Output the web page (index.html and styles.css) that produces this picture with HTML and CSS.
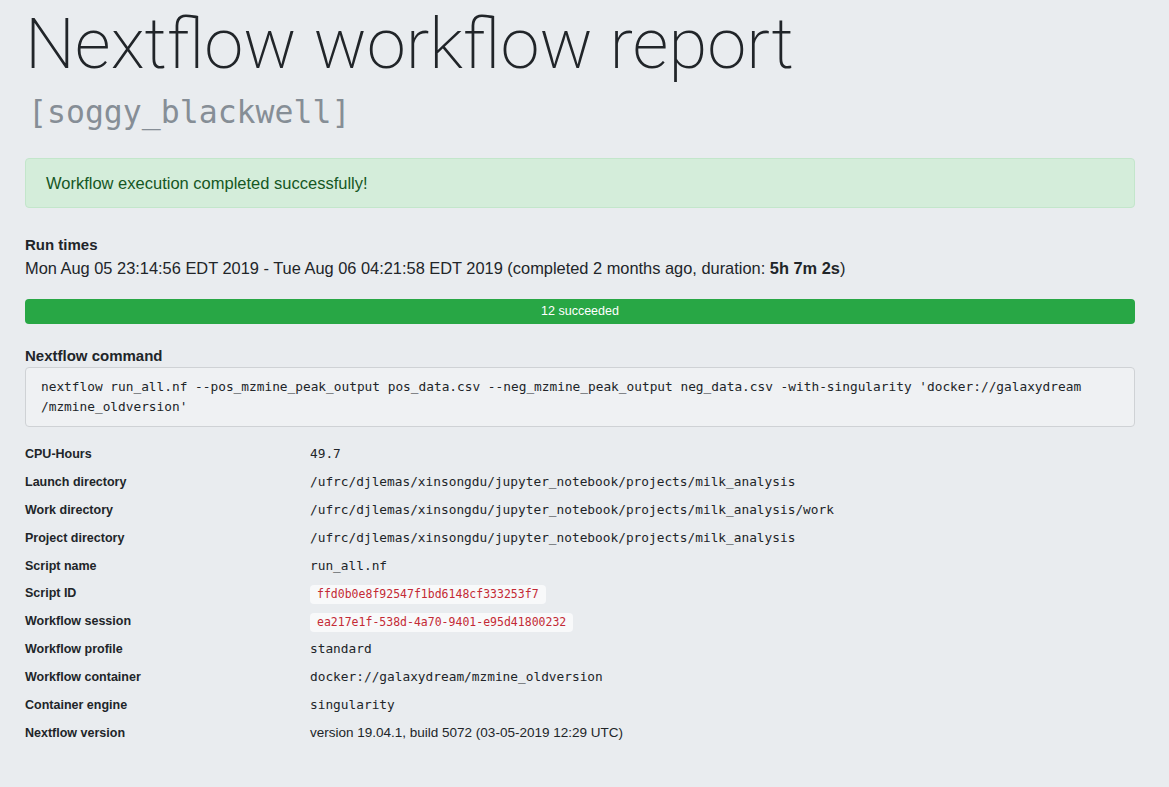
FILE: index.html
```html
<!DOCTYPE html>
<html lang="en">
<head>
<meta charset="utf-8">
<title>Nextflow workflow report</title>
<link rel="stylesheet" href="styles.css">
</head>
<body>
<div class="container">
  <h1 class="title">Nextflow workflow report</h1>
  <div class="run-name"><code>[soggy_blackwell]</code></div>

  <div class="alert">Workflow execution completed successfully!</div>

  <h5 class="section section-times">Run times</h5>
  <p class="run-times">Mon Aug 05 23:14:56 EDT 2019 - Tue Aug 06 04:21:58 EDT 2019 (completed 2 months ago, duration: <strong>5h 7m 2s</strong>)</p>

  <div class="progress"><div class="progress-bar" style="width: 100%">12 succeeded</div></div>

  <h5 class="section section-command">Nextflow command</h5>
  <pre class="command">nextflow run_all.nf --pos_mzmine_peak_output pos_data.csv --neg_mzmine_peak_output neg_data.csv -with-singularity 'docker://galaxydream
/mzmine_oldversion'</pre>

  <dl class="details">
    <dt>CPU-Hours</dt><dd class="mono">49.7</dd>
    <dt>Launch directory</dt><dd class="mono">/ufrc/djlemas/xinsongdu/jupyter_notebook/projects/milk_analysis</dd>
    <dt>Work directory</dt><dd class="mono">/ufrc/djlemas/xinsongdu/jupyter_notebook/projects/milk_analysis/work</dd>
    <dt>Project directory</dt><dd class="mono">/ufrc/djlemas/xinsongdu/jupyter_notebook/projects/milk_analysis</dd>
    <dt>Script name</dt><dd class="mono">run_all.nf</dd>
    <dt>Script ID</dt><dd><code class="pill">ffd0b0e8f92547f1bd6148cf333253f7</code></dd>
    <dt>Workflow session</dt><dd><code class="pill">ea217e1f-538d-4a70-9401-e95d41800232</code></dd>
    <dt>Workflow profile</dt><dd class="mono">standard</dd>
    <dt>Workflow container</dt><dd class="mono">docker://galaxydream/mzmine_oldversion</dd>
    <dt>Container engine</dt><dd class="mono">singularity</dd>
    <dt>Nextflow version</dt><dd class="sans">version 19.04.1, build 5072 (03-05-2019 12:29 UTC)</dd>
  </dl>
</div>
</body>
</html>
```

FILE: styles.css
```css
html, body {
  margin: 0;
  padding: 0;
  background: #e9ecef;
  color: #212529;
  font-family: "Liberation Sans", Arial, sans-serif;
  font-size: 16px;
}

.container {
  width: 1110px;
  margin-left: 25px;
  padding-top: 2px;
}

.title {
  margin: 0;
  font-family: Roboto, "Liberation Sans", sans-serif;
  font-weight: 200;
  font-size: 70.4px;
  line-height: 84px;
  color: #212529;
}

.run-name {
  margin-top: 6px;
  line-height: 40px;
  padding-left: 3px;
}

.run-name code {
  font-family: "DejaVu Sans Mono", monospace;
  font-size: 31.5px;
  color: #868e96;
}

.alert {
  margin-top: 20px;
  padding: 12px 20px;
  background: #d4edda;
  border: 1px solid #c3e6cb;
  border-radius: 4px;
  color: #155724;
  font-size: 16.5px;
  line-height: 24px;
}

.section {
  font-size: 15px;
  font-weight: 700;
  line-height: 20px;
}

.section-times {
  margin: 27px 0 1px;
}

.section-command {
  margin: 22px 0 1px;
}

.run-times {
  margin: 0;
  font-size: 16.4px;
  line-height: 24px;
}

.progress {
  margin-top: 19px;
  height: 25px;
  border-radius: 4px;
  overflow: hidden;
  background: #e9ecef;
}

.progress-bar {
  height: 100%;
  background: #28a745;
  color: #fff;
  font-size: 12.5px;
  line-height: 25px;
  text-align: center;
}

.command {
  margin: 0;
  padding: 9px 15px;
  background: #eff1f3;
  border: 1px solid #cfd2d5;
  border-radius: 4px;
  font-family: "DejaVu Sans Mono", monospace;
  font-size: 12.8px;
  line-height: 20px;
  color: #212529;
  white-space: pre;
}

.details {
  display: grid;
  grid-template-columns: 285px 1fr;
  grid-auto-rows: 27.9px;
  align-items: center;
  margin: 13px 0 0;
}

.details dt {
  font-size: 12.5px;
  font-weight: 700;
  line-height: 20px;
}

.details dd {
  margin: 0;
  line-height: 20px;
}

.details .mono {
  font-family: "DejaVu Sans Mono", monospace;
  font-size: 12.8px;
}

.details .sans {
  font-size: 13.5px;
}

.pill {
  display: inline-block;
  font-family: "DejaVu Sans Mono", monospace;
  font-size: 11.5px;
  line-height: 19px;
  color: #c42a35;
  background: #f8f9fa;
  padding: 0 7px;
  border-radius: 4px;
}
```
